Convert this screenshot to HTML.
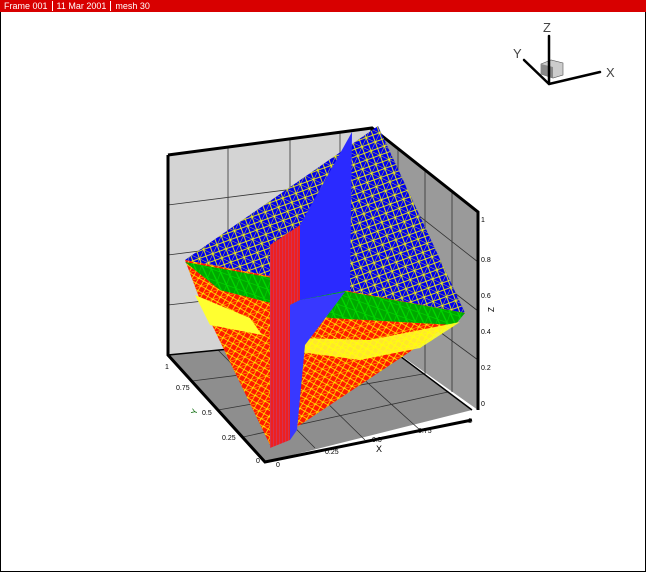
<!DOCTYPE html>
<html><head><style>
html,body{margin:0;padding:0;width:646px;height:572px;background:#fff;overflow:hidden}
.bar{position:absolute;left:0;top:0;width:646px;height:12px;background:#d80000;color:#fff;font:9px "Liberation Sans",sans-serif;line-height:12px;white-space:nowrap}
.bar span{padding:0 4px;border-right:1px solid #fff}
svg{position:absolute;left:0;top:0}
</style></head><body>
<svg width="646" height="572" viewBox="0 0 646 572">
<defs>
<pattern id="mesh" width="10" height="10" patternUnits="userSpaceOnUse" patternTransform="rotate(25)">
<path d="M0 0H10M0 0V10M0 0L10 10M10 0L0 10" stroke="#ff0" stroke-width="0.8" fill="none"/>
</pattern>
<pattern id="mesh2" width="8" height="8" patternUnits="userSpaceOnUse" patternTransform="rotate(-15)">
<path d="M0 0H8M0 0L8 8M8 0L0 8" stroke="#ff0" stroke-width="0.7" fill="none"/>
</pattern>
<pattern id="gmesh" width="10" height="10" patternUnits="userSpaceOnUse" patternTransform="rotate(20)">
<path d="M0 0H10M0 0V10M0 0L10 10" stroke="#0d0" stroke-width="1.2" fill="none"/>
</pattern>
<pattern id="vmesh" width="3" height="3" patternUnits="userSpaceOnUse">
<path d="M0 0V3" stroke="#7070ff" stroke-width="1"/>
</pattern>
</defs>
<line x1="0.5" y1="12" x2="0.5" y2="572" stroke="#000"/>
<line x1="645.5" y1="12" x2="645.5" y2="572" stroke="#000"/>
<line x1="0" y1="571.5" x2="646" y2="571.5" stroke="#000"/>
<!-- walls -->
<polygon points="168,155 372,128 372,335 168,355" fill="#d4d4d4"/>
<polygon points="372,128 478,212 478,410 372,335" fill="#9a9a9a"/>
<polygon points="168,355 372,335 472,410 265,462" fill="#8e8e8e"/>
<g stroke="#333" stroke-width="0.8" fill="none">
<path d="M228,147V349M290,139V343M340,132V338M168,205L372,179M168,255L372,229M168,305L372,282"/>
<path d="M398,149V354M425,170V374M452,191V392M372,179L478,262M372,229L478,311M372,282L478,360"/>
<path d="M192,381L398,355M218,410L423,374M243,437L448,392M218,350L315,448M268,345L365,440M320,340L420,430"/>
</g>
<g stroke="#000" stroke-width="3" fill="none">
<path d="M168,155L372,128L478,212V410M168,155V355L265,462L472,420M372,128V335"/>
</g>
<path d="M168,355L372,335L472,410" stroke="#000" stroke-width="1.5" fill="none"/>
<!-- shape -->
<polygon points="378,126 465,313 185,260" fill="#0000ee"/>
<polygon points="378,126 465,313 185,260" fill="url(#mesh)"/>
<polygon points="185,260 465,313 420,345 270,445 200,300" fill="#ff1a00"/>
<polygon points="185,260 465,313 420,345 270,445 200,300" fill="url(#mesh2)"/>
<polygon points="185,262 465,313 455,325 330,318 220,290" fill="#00a800"/>
<polygon points="185,262 465,313 455,325 330,318 220,290" fill="url(#gmesh)"/>
<polygon points="195,295 250,318 262,335 210,325" fill="#ffff30"/>
<polygon points="300,338 370,340 460,322 420,348 360,360 300,352" fill="#ffff30" opacity="0.9"/>
<polygon points="300,338 370,340 460,322 420,348 360,360 300,352" fill="url(#mesh2)"/>
<!-- vertical plane -->
<polygon points="300,225 352,132 350,290 300,300" fill="#2a2aff"/>
<polygon points="270,245 300,225 300,300 290,305 290,440 270,448" fill="#ee2020"/>
<polygon points="270,245 300,225 300,300 290,305 290,440 270,448" fill="url(#vmesh)" opacity="0.45"/>
<polygon points="300,300 345,292 305,345 297,430 290,440 290,305" fill="#3838ff"/>
<!-- labels -->
<g font-family="Liberation Sans,sans-serif" font-size="7" fill="#000">
<text x="481" y="222">1</text><text x="481" y="262">0.8</text><text x="481" y="298">0.6</text><text x="481" y="334">0.4</text><text x="481" y="370">0.2</text><text x="481" y="406">0</text>
<text x="494" y="312" font-size="8" transform="rotate(-90 494 312)">Z</text>
<text x="165" y="369">1</text><text x="176" y="390">0.75</text><text x="202" y="415">0.5</text><text x="222" y="440">0.25</text><text x="256" y="463">0</text>
<text x="196" y="415" font-size="8" fill="#060" transform="rotate(-70 196 415)">Y</text>
<text x="276" y="467">0</text><text x="325" y="454">0.25</text><text x="372" y="442">0.5</text><text x="418" y="433">0.75</text><text x="468" y="423">1</text>
<text x="376" y="452" font-size="9">X</text>
</g>
<!-- triad -->
<polygon points="541,64 551,60 563,63 563,75 553,78 541,74" fill="#ccc" stroke="#555" stroke-width="0.6"/>
<polygon points="541,64 553,67 553,78 541,74" fill="#888"/>
<g stroke="#000" stroke-width="2.5" stroke-linecap="round" fill="none">
<path d="M549,84V36M549,84L524,60M549,84L600,72"/>
</g>
<g font-family="Liberation Sans,sans-serif" font-size="13" fill="#444">
<text x="543" y="32">Z</text><text x="513" y="58">Y</text><text x="606" y="77">X</text>
</g>
</svg>
<div class="bar"><span>Frame 001</span><span>11 Mar 2001</span><span style="border:0">mesh 30</span></div>
</body></html>
